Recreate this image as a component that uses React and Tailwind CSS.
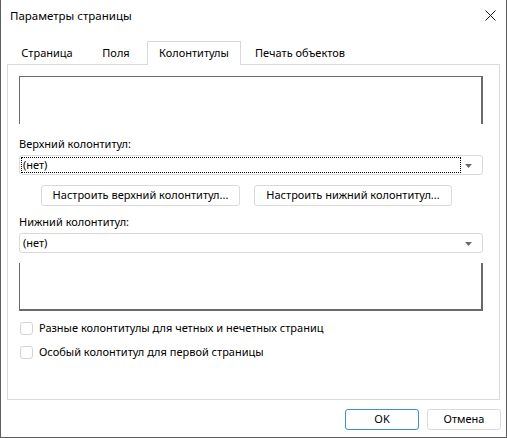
import React from 'react';

const font = { fontFamily: '"Noto Sans", "Open Sans", sans-serif' };

function Combo({ focused }) {
  return (
    <div className="relative h-[20px] w-[464px] rounded-[3px] border border-[#dadada] bg-white">
      {focused && (
        <div className="absolute left-[1px] top-[1px] h-[16px] w-[440px] border border-dotted border-black" />
      )}
      <span className="absolute left-[3px] top-[1px] text-[11px] leading-[16px] text-black">(нет)</span>
      <svg className="absolute right-[10px] top-[8px]" width="7" height="4" viewBox="0 0 7 4">
        <path d="M0 0 H7 L3.5 4 Z" fill="#6b6b6b" />
      </svg>
    </div>
  );
}

function Checkbox({ label }) {
  return (
    <div className="flex h-[12px] items-center gap-[6px]">
      <div className="h-[13px] w-[13px] rounded-[3px] border border-[#d4d4d4] bg-white" />
      <span className="text-[11px] leading-[16px] text-black">{label}</span>
    </div>
  );
}

export default function App() {
  const tabs = [
    { name: 'Страница', w: 'w-[76px]' },
    { name: 'Поля', w: 'w-[62px]' },
    { name: 'Колонтитулы', w: 'w-[94px]', active: true },
    { name: 'Печать объектов', w: 'w-[118px]' },
  ];

  return (
    <div style={font} className="flex h-[438px] w-[507px] flex-col border-x border-b border-[#5e5e5e] bg-white">
      <div className="flex h-[31px] items-center justify-between pl-[9px] pr-[10px]">
        <span className="text-[11.5px] text-black">Параметры страницы</span>
        <svg width="11" height="11" viewBox="0 0 11 11">
          <path d="M0.5 0.5 L10.5 10.5 M10.5 0.5 L0.5 10.5" stroke="#1a1a1a" strokeWidth="1" />
        </svg>
      </div>

      <div className="mt-[10px] flex h-[23px] pl-[8px]">
        {tabs.map((t) => (
          <div
            key={t.name}
            className={
              t.active
                ? `${t.w} relative z-10 -mb-[1px] flex h-[24px] items-center justify-center border-x border-t border-[#d9d9d9] bg-white text-[11px] text-black`
                : `${t.w} flex items-center justify-center pt-[1px] text-[11px] text-black`
            }
          >
            {t.name}
          </div>
        ))}
      </div>

      <div className="mx-[6px] flex h-[336px] flex-col border border-[#dadad6] pl-[11px]">
        <div className="mt-[11px] h-[48px] w-[464px] border-l border-t border-r-2 border-[#6a6a6a]" />

        <div className="mt-[12px] text-[11px] leading-[16px] text-black">Верхний колонтитул:</div>
        <div className="mt-[3px]">
          <Combo focused />
        </div>

        <div className="mt-[10px] flex gap-[14px] pl-[22px]">
          <div className="flex h-[21px] w-[199px] items-center justify-center rounded-[3px] border border-[#dadada] text-[11px] text-black">
            Настроить верхний колонтитул...
          </div>
          <div className="flex h-[21px] w-[198px] items-center justify-center rounded-[3px] border border-[#dadada] text-[11px] text-black">
            Настроить нижний колонтитул...
          </div>
        </div>

        <div className="mt-[8px] text-[11px] leading-[16px] text-black">Нижний колонтитул:</div>
        <div className="mt-[3px]">
          <Combo />
        </div>

        <div className="mt-[10px] h-[48px] w-[464px] border-b-2 border-l border-r-2 border-[#6a6a6a]" />

        <div className="mt-[11px] flex flex-col gap-[12px] pl-[1px]">
          <Checkbox label="Разные колонтитулы для четных и нечетных страниц" />
          <Checkbox label="Особый колонтитул для первой страницы" />
        </div>
      </div>

      <div className="mt-[9px] flex justify-end gap-[8px] pr-[5px]">
        <div className="flex h-[21px] w-[74px] items-center justify-center rounded-[3px] border border-[#3d8fd6] text-[11px] text-black">
          OK
        </div>
        <div className="flex h-[21px] w-[74px] items-center justify-center rounded-[3px] border border-[#dadada] text-[11px] text-black">
          Отмена
        </div>
      </div>
    </div>
  );
}
